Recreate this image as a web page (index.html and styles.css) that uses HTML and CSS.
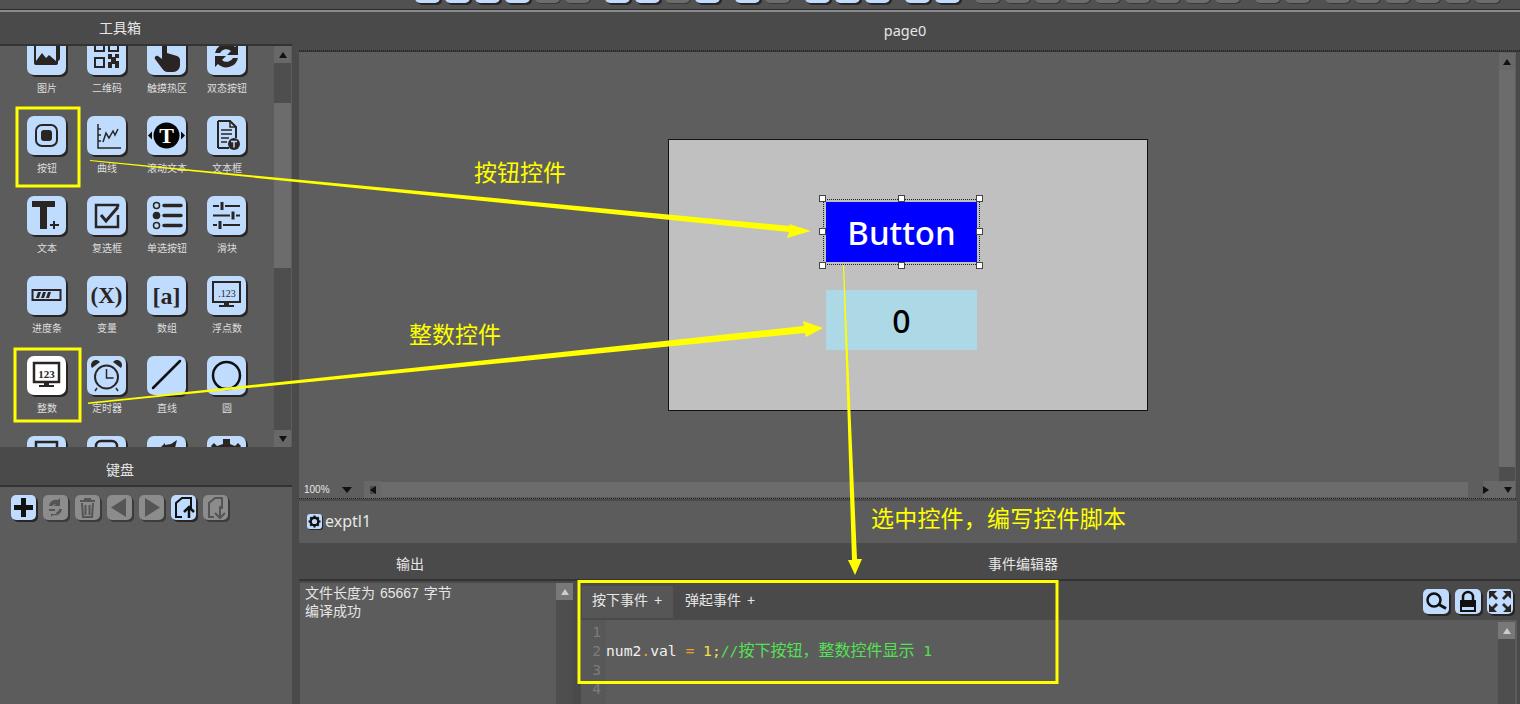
FILE: index.html
```html
<!DOCTYPE html>
<html lang="zh">
<head>
    <meta charset="utf-8">
    <title>page0</title>
    <link rel="stylesheet" href="styles.css">
</head>
<body>
<div class="app">
    <div class="toolbar">
        <span class="tb on"></span><span class="tb on"></span><span class="tb on"></span><span class="tb on"></span><span class="tb"></span><span class="tb"></span>
        <span class="tb on gap"></span><span class="tb on"></span><span class="tb"></span><span class="tb on"></span>
        <span class="tb on gap"></span><span class="tb"></span>
        <span class="tb on gap"></span><span class="tb on"></span><span class="tb on"></span>
        <span class="tb on gap"></span><span class="tb on"></span>
        <span class="tb gap"></span><span class="tb"></span><span class="tb"></span><span class="tb"></span><span class="tb"></span><span class="tb"></span><span class="tb"></span><span class="tb"></span><span class="tb"></span>
        <span class="tb gap"></span><span class="tb"></span>
        <span class="tb gap"></span><span class="tb"></span><span class="tb"></span><span class="tb"></span><span class="tb"></span><span class="tb"></span>
    </div>

    <div class="main">
        <div class="left">
            <div class="panel-title tools-title">工具箱</div>
            <div class="toolbox">
                <div class="tool-grid">
                    <div class="tool"><span class="tile"><svg viewBox="0 0 39 39"><rect x="12" y="4" width="20" height="20" rx="2" fill="none" stroke="#2a2522" stroke-width="2"/><rect x="7" y="8" width="24" height="21" rx="2" fill="#2a2522"/><rect x="9" y="10" width="20" height="15" fill="#bfdcff"/><path d="M9 25l6-8 4 5 3-3 7 6z" fill="#2a2522"/></svg></span><span class="tool-name">图片</span></div>
                    <div class="tool"><span class="tile"><svg viewBox="0 0 39 39"><g fill="none" stroke="#2a2522" stroke-width="2"><rect x="8" y="6" width="9" height="9"/><rect x="22" y="6" width="9" height="9"/><rect x="8" y="22" width="9" height="9"/></g><path d="M21 18h4v3h3v-3h4v4h-3v3h3v7h-4v-4h-3v4h-4v-6h3v-3h-3z" fill="#2a2522"/></svg></span><span class="tool-name">二维码</span></div>
                    <div class="tool"><span class="tile"><svg viewBox="0 0 39 39"><path d="M15 8a2.500 2.500 0 0 1 5 0v9l10 3c2 1 3 2 3 4v5c0 4-3 7-7 7h-5c-3 0-5-2-7-5l-6-8c-1-2 1-4 3-3l4 3z" fill="#2a2522"/></svg></span><span class="tool-name">触摸热区</span></div>
                    <div class="tool"><span class="tile"><svg viewBox="0 0 39 39"><path d="M8 17a12 12 0 0 1 20-6l3-3v11h-11l4-4a7 7 0 0 0-11 2zM31 22a12 12 0 0 1-20 6l-3 3v-11h11l-4 4a7 7 0 0 0 11-2z" fill="#2a2522"/></svg></span><span class="tool-name">双态按钮</span></div>

                    <div class="tool"><span class="tile"><svg viewBox="0 0 39 39"><rect x="9" y="9" width="21" height="21" rx="6" fill="none" stroke="#2a2522" stroke-width="2"/><rect x="14" y="14" width="11" height="11" rx="3" fill="#2a2522"/></svg></span><span class="tool-name">按钮</span></div>
                    <div class="tool"><span class="tile"><svg viewBox="0 0 39 39"><path d="M11 8v24h23M11 13h3M11 19h3M11 25h3" fill="none" stroke="#2a2522" stroke-width="1.500"/><path d="M16 26l3-9 3 5 4-7 2 4 3-6" fill="none" stroke="#2a2522" stroke-width="1.500"/></svg></span><span class="tool-name">曲线</span></div>
                    <div class="tool"><span class="tile"><svg viewBox="0 0 39 39"><circle cx="19.500" cy="19.500" r="13" fill="#050505"/><path d="M1 19.500l4-4v8zM38 19.500l-4-4v8z" fill="#050505"/><text x="19.500" y="27" class="svg-serif t-big">T</text></svg></span><span class="tool-name">滚动文本</span></div>
                    <div class="tool"><span class="tile"><svg viewBox="0 0 39 39"><path d="M11 5h12l6 6v11M22 32h-11z M11 5v27" fill="none" stroke="#2a2522" stroke-width="2"/><path d="M23 5v6h6M14 14h11M14 18h11M14 22h8M14 26h6" fill="none" stroke="#2a2522" stroke-width="1.500"/><circle cx="27" cy="28" r="6" fill="#2a2522"/><path d="M24 25.500h6M27 25.500v6" stroke="#bfdcff" stroke-width="1.500"/></svg></span><span class="tool-name">文本框</span></div>

                    <div class="tool"><span class="tile"><svg viewBox="0 0 39 39"><path d="M5 5h23v6h-8v22h-7v-22h-8z" fill="#2a2522"/><path d="M27 25v8M23 29h9" stroke="#2a2522" stroke-width="2"/></svg></span><span class="tool-name">文本</span></div>
                    <div class="tool"><span class="tile"><svg viewBox="0 0 39 39"><path d="M31 11v-2h-22v22h22v-12" fill="none" stroke="#2a2522" stroke-width="2.500"/><path d="M14 19l5 6 12-14" fill="none" stroke="#2a2522" stroke-width="3"/></svg></span><span class="tool-name">复选框</span></div>
                    <div class="tool"><span class="tile"><svg viewBox="0 0 39 39"><circle cx="9.500" cy="9.500" r="3" fill="none" stroke="#2a2522" stroke-width="1.500"/><circle cx="9.500" cy="19.500" r="3.800" fill="#2a2522"/><circle cx="9.500" cy="29.500" r="3" fill="none" stroke="#2a2522" stroke-width="1.500"/><path d="M17 9.500h17M17 19.500h17M17 29.500h17" stroke="#2a2522" stroke-width="3.500" stroke-linecap="round"/></svg></span><span class="tool-name">单选按钮</span></div>
                    <div class="tool"><span class="tile"><svg viewBox="0 0 39 39"><path d="M6 10h6M18 10h15M6 19.500h17M29 19.500h4M6 29h4M16 29h17" stroke="#2a2522" stroke-width="2"/><path d="M15 6v8M26 15.500v8M13 25v8" stroke="#2a2522" stroke-width="3"/></svg></span><span class="tool-name">滑块</span></div>

                    <div class="tool"><span class="tile"><svg viewBox="0 0 39 39"><rect x="5.500" y="14" width="28" height="10" fill="none" stroke="#2a2522" stroke-width="2"/><path d="M9 22l2-6h3l-2 6zM14 22l2-6h3l-2 6zM19 22l2-6h3l-2 6z" fill="#2a2522"/></svg></span><span class="tool-name">进度条</span></div>
                    <div class="tool"><span class="tile"><svg viewBox="0 0 39 39"><text x="19.500" y="27" class="svg-serif t-x">(X)</text></svg></span><span class="tool-name">变量</span></div>
                    <div class="tool"><span class="tile"><svg viewBox="0 0 39 39"><text x="19.500" y="28" class="svg-serif t-a">[a]</text></svg></span><span class="tool-name">数组</span></div>
                    <div class="tool"><span class="tile"><svg viewBox="0 0 39 39"><rect x="6" y="6" width="27" height="20" fill="none" stroke="#2a2522" stroke-width="2"/><path d="M17 26h5v3h5v2h-15v-2h5z" fill="#2a2522"/><text x="20" y="21" class="svg-serif t-num">.123</text></svg></span><span class="tool-name">浮点数</span></div>

                    <div class="tool"><span class="tile white"><svg viewBox="0 0 39 39"><rect x="7" y="7" width="25" height="19" fill="none" stroke="#2a2522" stroke-width="2.500"/><path d="M17 26h5v3h5v2h-15v-2h5z" fill="#2a2522"/><text x="19.500" y="22" class="svg-serif t-num bold">123</text></svg></span><span class="tool-name">整数</span></div>
                    <div class="tool"><span class="tile"><svg viewBox="0 0 39 39"><circle cx="19.500" cy="21" r="11.500" fill="none" stroke="#2a2522" stroke-width="2"/><path d="M19.500 13v9h7M10 32l-2 3M29 32l2 3" fill="none" stroke="#2a2522" stroke-width="1.500"/><path d="M5 12a5 5 0 0 1 8-6zM34 12a5 5 0 0 0-8-6z" fill="#2a2522"/></svg></span><span class="tool-name">定时器</span></div>
                    <div class="tool"><span class="tile"><svg viewBox="0 0 39 39"><path d="M6 32l27-27" stroke="#111" stroke-width="2.500" stroke-linecap="round"/></svg></span><span class="tool-name">直线</span></div>
                    <div class="tool"><span class="tile"><svg viewBox="0 0 39 39"><circle cx="19.500" cy="19.500" r="13.500" fill="none" stroke="#111" stroke-width="2.500"/></svg></span><span class="tool-name">圆</span></div>

                    <div class="tool"><span class="tile"><svg viewBox="0 0 39 39"><rect x="9" y="6" width="21" height="20" fill="none" stroke="#2a2522" stroke-width="2.500"/></svg></span></div>
                    <div class="tool"><span class="tile"><svg viewBox="0 0 39 39"><rect x="9" y="5" width="21" height="20" rx="5" fill="none" stroke="#2a2522" stroke-width="2.500"/></svg></span></div>
                    <div class="tool"><span class="tile"><svg viewBox="0 0 39 39"><path d="M5 12h8l5-5v2l6-1 6-4-2 8 5-1-5 7h-22z" fill="#2a2522"/></svg></span></div>
                    <div class="tool"><span class="tile"><svg viewBox="0 0 39 39"><path d="M16 3h7v5l5 2 3-3 3 3-3 4v10h-24v-10l-3-4 3-3 3 3 6-2z" fill="#2a2522"/></svg></span></div>
                </div>
                <div class="vscroll tools-scroll">
                    <span class="sbtn"><i class="tri up"></i></span>
                    <span class="thumb"></span>
                    <span class="sbtn end"><i class="tri down"></i></span>
                </div>
            </div>

            <div class="panel-title keys-title">键盘</div>
            <div class="key-bar">
                <span class="key"><svg viewBox="0 0 25 25"><path d="M10 3h5v7h7v5h-7v7h-5v-7h-7v-5h7z" fill="#111"/></svg></span>
                <span class="key off"><svg viewBox="0 0 25 25"><path d="M6 11a7 7 0 0 1 9-6l2-2v8h-6l2-2c-2 0-3 1-4 2zM6 14h6v2h-6zM19 14a7 7 0 0 1-9 6l-2 2v-3h6l-1-2c2 0 3-1 3-3z" fill="#555"/></svg></span>
                <span class="key off"><svg viewBox="0 0 25 25"><path d="M5 6h15M10 6v-2h5v2M7 8l1 14h9l1-14M10.500 10v10M14.500 10v10" fill="none" stroke="#555" stroke-width="2"/></svg></span>
                <span class="key off"><svg viewBox="0 0 25 25"><path d="M19 3v19l-15-9.500z" fill="#555"/></svg></span>
                <span class="key off"><svg viewBox="0 0 25 25"><path d="M6 3v19l15-9.500z" fill="#555"/></svg></span>
                <span class="key"><svg viewBox="0 0 25 25"><path d="M11 22h-6v-14l6-5h9v12" fill="none" stroke="#111" stroke-width="2"/><path d="M13 17l5-5 5 5M18 13v10" fill="none" stroke="#111" stroke-width="2.500"/></svg></span>
                <span class="key off"><svg viewBox="0 0 25 25"><path d="M11 22h-5v-14l6-5h7v11" fill="none" stroke="#555" stroke-width="2"/><path d="M12 18l5 5 5-5M17 11v11" fill="none" stroke="#555" stroke-width="2"/></svg></span>
            </div>
        </div>

        <div class="right">
            <div class="panel-title page-title">page0</div>
            <div class="canvas">
                <div class="canvas-body">
                    <div class="canvas-view">
                        <div class="screen">
                            <div class="widget btn-widget">
                                Button
                                <i class="handle h-tl"></i><i class="handle h-tc"></i><i class="handle h-tr"></i>
                                <i class="handle h-ml"></i><i class="handle h-mr"></i>
                                <i class="handle h-bl"></i><i class="handle h-bc"></i><i class="handle h-br"></i>
                            </div>
                            <div class="widget num-widget">0</div>
                        </div>
                    </div>
                    <div class="vscroll canvas-scroll">
                        <span class="sbtn"><i class="tri up"></i></span>
                        <span class="thumb"></span>
                    </div>
                </div>
                <div class="hbar">
                    <span class="zoom-label">100%</span>
                    <i class="tri down zoom-arrow"></i>
                    <span class="hbtn"><i class="tri left"></i></span>
                    <span class="hthumb"></span>
                    <span class="hbtn push"><i class="tri right"></i></span>
                    <span class="hbtn last"><i class="tri down"></i></span>
                </div>
            </div>

            <div class="tm-row">
                <span class="tm-icon"><svg viewBox="0 0 15 15"><circle cx="7.500" cy="7.500" r="3.800" fill="none" stroke="#111" stroke-width="2.400"/><path d="M7.500 1.500v2M7.500 11.500v2M1.500 7.500h2M11.500 7.500h2M3.300 3.300l1.400 1.400M10.300 10.300l1.400 1.400M11.700 3.300l-1.400 1.400M4.700 10.300l-1.400 1.400" stroke="#111" stroke-width="2"/></svg></span>
                <span>exptl1</span>
            </div>

            <div class="bottom">
                <div class="output">
                    <div class="panel-title out-title">输出</div>
                    <div class="out-body">
                        <div class="out-text">文件长度为 65667 字节<br>编译成功</div>
                        <div class="vscroll out-scroll">
                            <span class="sbtn light"><i class="tri up pale"></i></span>
                        </div>
                    </div>
                </div>
                <div class="events">
                    <div class="panel-title ev-title">事件编辑器</div>
                    <div class="tabs">
                        <span class="tab active">按下事件 +</span>
                        <span class="tab">弹起事件 +</span>
                        <div class="tab-tools">
                            <span class="tab-btn"><svg viewBox="0 0 26 25"><circle cx="11" cy="11" r="6.500" fill="none" stroke="#111" stroke-width="2.500"/><path d="M16 15.500l7 4" stroke="#111" stroke-width="3"/></svg></span>
                            <span class="tab-btn"><svg viewBox="0 0 26 25"><path d="M8 12v-4a5 5 0 0 1 10 0v4" fill="none" stroke="#111" stroke-width="2.500"/><path d="M5 11h16v12h-16zM7 18v3h12v-3z" fill="#111" fill-rule="evenodd"/></svg></span>
                            <span class="tab-btn"><svg viewBox="0 0 26 25"><path d="M2 2h8l-3 3 4 4-2 2-4-4-3 3zM24 2v8l-3-3-4 4-2-2 4-4-3-3zM2 23v-8l3 3 4-4 2 2-4 4 3 3zM24 23h-8l3-3-4-4 2-2 4 4 3-3z" fill="#2a2522"/></svg></span>
                        </div>
                    </div>
                    <div class="editor">
                        <div class="lines"><span>1</span><span>2</span><span>3</span><span>4</span></div>
                        <div class="code">
                            <div class="code-line"></div>
                            <div class="code-line"><span class="c-id">num2</span><span class="c-op">.</span><span class="c-id">val</span> <span class="c-op">=</span> <span class="c-num">1;</span><span class="c-cm">//<span class="c-cjk">按下按钮，整数控件显示</span> 1</span></div>
                        </div>
                        <div class="vscroll ed-scroll">
                            <span class="sbtn light"><i class="tri up pale"></i></span>
                        </div>
                    </div>
                </div>
            </div>
        </div>
    </div>

    <!-- annotations drawn over the screenshot -->
    <svg class="marks" viewBox="0 0 1520 704">
        <g fill="none" stroke="#ffff00" stroke-width="3">
            <rect x="17" y="108" width="62" height="78"/>
            <rect x="15" y="349" width="65" height="72"/>
            <rect x="579" y="581.500" width="478" height="101"/>
        </g>
        <g fill="#ffff00">
            <path d="M90 160L790 226L789 224L811 231L787 238L789 232L90 161Z"/>
            <path d="M88 402.500L804 326L803 321L823 328L806 337L805 333L88 404Z"/>
            <path d="M843 265L852 560L848 560L855 575L862 559L857 559L844 265Z"/>
        </g>
    </svg>
    <div class="note note-btn">按钮控件</div>
    <div class="note note-num">整数控件</div>
    <div class="note note-sel">选中控件，编写控件脚本</div>
</div>
</body>
</html>
```

FILE: styles.css
```css
* {
    box-sizing: border-box;
}
html, body {
    margin: 0;
    height: 100%;
    overflow: hidden;
}
body {
    background-color: #4a4a4a;
    color: #e6e6e6;
    font-family: "Liberation Sans", "Noto Sans CJK SC", sans-serif;
    font-size: 14px;
}
.app {
    position: relative;
    width: 1520px;
    height: 704px;
    overflow: hidden;
}

/* top toolbar, only the bottom edge of it is on screen */
.toolbar {
    height: 12px;
    display: flex;
    align-items: flex-end;
    gap: 5px;
    padding: 0 0 7px 415px;
    background-color: #515151;
    border-bottom: 2px solid #8a8a8a;
    box-shadow: inset 0 -1px 0 #2e2e2e;
    overflow: hidden;
}
.tb {
    flex: none;
    width: 25px;
    height: 20px;
    border-radius: 5px;
    background-color: #6c6c6c;
    box-shadow: 1px 1px 0 #3a3a3a;
}
.tb.on {
    background-color: #bfdcff;
    box-shadow: 2px 2px 0 #2a2522;
}
.tb.gap {
    margin-left: 10px;
}

.main {
    display: flex;
    height: 692px;
}
.panel-title {
    flex: none;
    text-align: center;
    color: #e6e6e6;
    background-color: #4a4a4a;
}

/* left column */
.left {
    flex: none;
    width: 292px;
    background-color: #4a4a4a;
}
.tools-title {
    height: 34px;
    padding: 8px 52px 0 0;
    line-height: 16px;
    border-bottom: 2px solid #333;
}
.toolbox {
    display: flex;
    height: 401px;
    background-color: #5c5c5c;
    overflow: hidden;
}
.tool-grid {
    flex: none;
    width: 274px;
    margin-top: -10px;
    padding-left: 17px;
    display: grid;
    grid-template-columns: repeat(4, 60px);
    grid-auto-rows: 80px;
}
.tool {
    display: flex;
    flex-direction: column;
    align-items: center;
}
.tile {
    display: block;
    flex: none;
    width: 39px;
    height: 39px;
    margin-right: 1px;
    border-radius: 7px;
    background-color: #bfdcff;
    box-shadow: 2px 2px 0 #2a2522;
}
.tile.white {
    background-color: #fff;
}
.tile svg, .key svg, .tab-btn svg, .tm-icon svg {
    display: block;
    width: 100%;
    height: 100%;
}
.tool-name {
    margin-top: 7px;
    font-size: 10px;
    line-height: 14px;
    color: #dedede;
    white-space: nowrap;
}
.svg-serif {
    font-family: "Liberation Serif", serif;
    font-weight: bold;
    text-anchor: middle;
    fill: #2a2522;
}
.t-big {
    font-size: 22px;
    fill: #fff;
}
.t-x {
    font-size: 23px;
}
.t-a {
    font-size: 24px;
}
.t-num {
    font-size: 10px;
    font-weight: normal;
}
.t-num.bold {
    font-size: 11px;
    font-weight: bold;
}

.keys-title {
    height: 40px;
    padding: 15px 52px 0 0;
    line-height: 16px;
    border-bottom: 2px solid #333;
}
.key-bar {
    height: 217px;
    padding: 8px 0 0 11px;
    display: flex;
    align-items: flex-start;
    gap: 7px;
    background-color: #5c5c5c;
}
.key {
    display: block;
    flex: none;
    width: 25px;
    height: 25px;
    border-radius: 5px;
    background-color: #bfdcff;
    box-shadow: 2px 2px 0 #2a2522;
}
.key.off {
    background-color: #8c8c8c;
    box-shadow: 2px 2px 0 #3c3c3c;
}

/* scrollbars */
.vscroll {
    flex: none;
    display: flex;
    flex-direction: column;
    width: 17px;
    background-color: #4e4e4e;
}
.sbtn, .hbtn {
    flex: none;
    display: flex;
    align-items: center;
    justify-content: center;
    width: 100%;
    height: 17px;
    background-color: #686868;
}
.hbtn {
    width: 17px;
}
.hbtn.last {
    width: 15px;
}
.sbtn.light {
    background-color: #787878;
}
.sbtn.end {
    margin-top: auto;
}
.thumb {
    flex: none;
    background-color: #6c6c6c;
}
.tools-scroll .thumb {
    height: 165px;
    margin-top: 40px;
}
.tri {
    display: block;
    flex: none;
    width: 0;
    height: 0;
    border: 4px solid transparent;
}
.tri.up {
    border-top: 0;
    border-bottom: 6px solid #111;
}
.tri.down {
    border-bottom: 0;
    border-top: 6px solid #111;
}
.tri.left {
    border-left: 0;
    border-right: 6px solid #111;
}
.tri.right {
    border-right: 0;
    border-left: 6px solid #111;
}
.tri.pale {
    border-bottom-color: #ccc;
}

/* right column */
.right {
    flex: 1;
    display: flex;
    flex-direction: column;
    min-width: 0;
    padding-left: 7px;
}
.page-title {
    height: 39px;
    padding: 10px 9px 0 0;
    font-family: "Noto Sans", sans-serif;
    font-size: 14.5px;
    line-height: 16px;
    border-bottom: 1px dotted #222;
    box-shadow: 0 1px 0 #333;
}
.canvas {
    flex: none;
    width: 1217px;
    height: 447px;
    margin-top: 1px;
    background-color: #5e5e5e;
    border-bottom: 1px dotted #222;
    display: flex;
    flex-direction: column;
}
.canvas-body {
    flex: 1;
    display: flex;
    min-height: 0;
}
.canvas-view {
    flex: 1;
    padding: 87px 0 0 369px;
}
.screen {
    width: 480px;
    height: 272px;
    padding: 62px 0 0 157px;
    background-color: #c0c0c0;
    border: 1px solid #111;
}
.widget {
    width: 151px;
    height: 60px;
    display: flex;
    align-items: center;
    justify-content: center;
    font-family: "Noto Sans", sans-serif;
}
.btn-widget {
    position: relative;
    background-color: #0000ff;
    color: #fff;
    font-size: 33px;
    font-weight: 500;
    outline: 1px dotted #222;
    outline-offset: 2px;
}
.num-widget {
    margin-top: 28px;
    background-color: #add8e6;
    color: #000;
    font-size: 32px;
    font-weight: 500;
}
.handle {
    position: absolute;
    width: 7px;
    height: 7px;
    background-color: #fff;
    border: 1px solid #444;
}
.h-tl { left: -7px; top: -7px; }
.h-tc { left: 72px; top: -7px; }
.h-tr { right: -6px; top: -7px; }
.h-ml { left: -7px; top: 26px; }
.h-mr { right: -6px; top: 26px; }
.h-bl { left: -7px; bottom: -7px; }
.h-bc { left: 72px; bottom: -7px; }
.h-br { right: -6px; bottom: -7px; }

.canvas-scroll {
    width: 16px;
    margin: 1px 1px 0 0;
}
.canvas-scroll .thumb {
    flex: 1;
    margin-bottom: 14px;
}
.hbar {
    flex: none;
    display: flex;
    align-items: center;
    height: 17px;
    background-color: #5e5e5e;
}
.zoom-label {
    flex: none;
    width: 43px;
    padding-left: 5px;
    font-size: 10px;
}
.zoom-arrow {
    margin-right: 12px;
}
.hbar .tri.down.zoom-arrow {
    border-width: 6px 5px 0;
    border-color: #111 transparent transparent;
}
.hthumb {
    flex: none;
    width: 1087px;
    height: 15px;
    background-color: #6c6c6c;
}
.hbtn.push {
    margin-left: 15px;
}

.tm-row {
    flex: none;
    height: 42px;
    width: 1218px;
    margin-top: 2px;
    padding: 0 0 2px 8px;
    display: flex;
    align-items: center;
    gap: 3px;
    background-color: #5c5c5c;
    font-family: "Noto Sans", sans-serif;
    font-size: 16px;
}
.tm-icon {
    display: block;
    width: 15px;
    height: 15px;
    border-radius: 3px;
    background-color: #bfdcff;
    box-shadow: 1px 1px 0 #2a2522;
}

.bottom {
    flex: 1;
    display: flex;
    min-height: 0;
}
.output {
    flex: none;
    width: 279px;
    display: flex;
    flex-direction: column;
}
.out-title {
    height: 38px;
    padding: 13px 57px 0 0;
    line-height: 16px;
    border-bottom: 2px solid #333;
}
.out-body {
    flex: 1;
    display: flex;
    width: 273px;
    margin: 2px 0 0 1px;
    background-color: #5c5c5c;
}
.out-text {
    flex: 1;
    padding: 1px 0 0 5px;
    line-height: 18px;
    word-spacing: 1px;
}
.events {
    flex: 1;
    display: flex;
    flex-direction: column;
    min-width: 0;
}
.ev-title {
    height: 38px;
    padding: 13px 52px 0 0;
    line-height: 16px;
    border-bottom: 2px solid #333;
}
.tabs {
    flex: none;
    display: flex;
    align-items: stretch;
    height: 39px;
    padding: 5px 0 2px 4px;
    background-color: #4a4a4a;
}
.tab {
    padding: 5px 10px 0;
    line-height: 18px;
    word-spacing: 2px;
    color: #e6e6e6;
}
.tab.active {
    width: 91px;
    background-color: #565656;
    margin-right: 2px;
}
.tab-tools {
    margin-left: auto;
    display: flex;
    gap: 6px;
    padding: 3px 7px 0 0;
}
.tab-btn {
    display: block;
    width: 26px;
    height: 25px;
    border-radius: 5px;
    background-color: #bfdcff;
    box-shadow: 2px 2px 0 #2a2522;
}
.editor {
    flex: 1;
    display: flex;
    margin-left: 3px;
    width: 936px;
    min-height: 0;
    background-color: #5c5c5c;
    font-family: "DejaVu Sans Mono", monospace;
    font-size: 14.67px;
    line-height: 19px;
}
.lines {
    flex: none;
    width: 25px;
    padding: 2px 5px 0 0;
    text-align: right;
    color: #7c7c7c;
    background-color: #585858;
}
.lines span {
    display: block;
}
.code {
    flex: 1;
    padding: 2px 0 0 0;
}
.code-line {
    height: 19px;
    white-space: pre;
}
.c-id {
    color: #f0f0f0;
}
.c-op {
    color: #f0a020;
}
.c-num {
    color: #f5e04a;
}
.c-cm {
    color: #55e055;
}
.c-cjk {
    font-family: "Noto Sans CJK SC", sans-serif;
    font-size: 16px;
    line-height: 15px;
}
.ed-scroll {
    margin: 2px 2px 0 0;
}

/* overlay */
.marks {
    position: absolute;
    left: 0;
    top: 0;
    width: 1520px;
    height: 704px;
    pointer-events: none;
}
.note {
    position: absolute;
    color: #ffff00;
    font-family: "Noto Sans CJK SC", sans-serif;
    font-size: 23px;
    line-height: 30px;
    white-space: nowrap;
}
.note-btn { left: 474px; top: 156px; }
.note-num { left: 409px; top: 318px; }
.note-sel { left: 871px; top: 502px; letter-spacing: 0.2px; }
```
